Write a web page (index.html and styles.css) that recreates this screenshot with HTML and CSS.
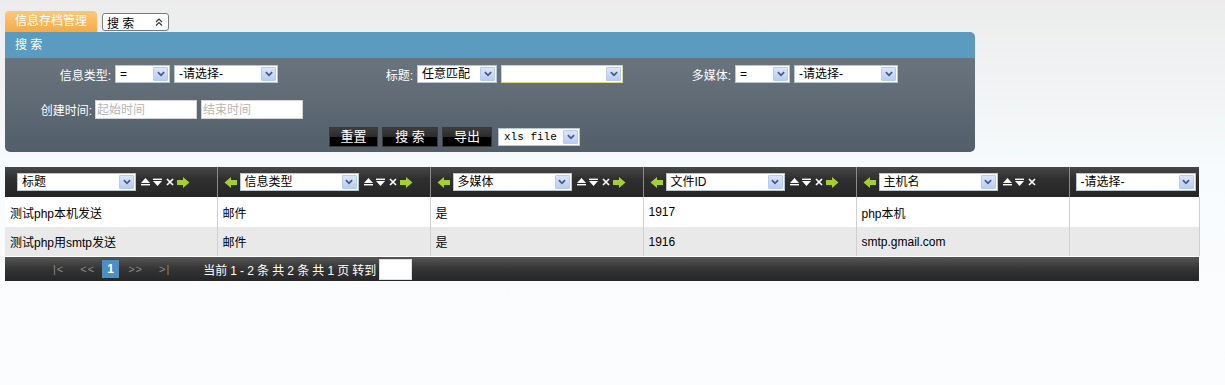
FILE: index.html
```html
<!DOCTYPE html>
<html>
<head>
<meta charset="utf-8">
<link rel="stylesheet" href="styles.css">
</head>
<body>
<svg class="defs" width="0" height="0">
  <defs>
    <symbol id="chev" viewBox="0 0 9 6"><path d="M1 1 L4.5 4.5 L8 1" fill="none" stroke="#465b80" stroke-width="2"/></symbol>
    <symbol id="up" viewBox="0 0 9 8"><path d="M4.5 0 L9 5 L0 5 Z" fill="#fff"/><rect x="0" y="6" width="9" height="1.4" fill="#fff"/></symbol>
    <symbol id="down" viewBox="0 0 9 8"><rect x="0" y="0.6" width="9" height="1.4" fill="#fff"/><path d="M0 3 L9 3 L4.5 8 Z" fill="#fff"/></symbol>
    <symbol id="x" viewBox="0 0 8 8"><path d="M1 1 L7 7 M7 1 L1 7" stroke="#fff" stroke-width="1.7"/></symbol>
    <symbol id="ar" viewBox="0 0 13 11"><path d="M0 3 H6 V0 L12.5 5.5 L6 11 V8 H0 Z" fill="#a4cf2c"/></symbol>
    <symbol id="al" viewBox="0 0 13 11"><path d="M13 3 H7 V0 L0.5 5.5 L7 11 V8 H13 Z" fill="#a4cf2c"/></symbol>
  </defs>
</svg>

<div class="tabs">
  <div class="tab">信息存档管理</div>
  <div class="tabsel"><span>搜 索</span><svg class="dchev" viewBox="0 0 10 10" width="10" height="10"><path d="M2 5 L5 2 L8 5 M2 8.5 L5 5.5 L8 8.5" fill="none" stroke="#333" stroke-width="1.2"/></svg></div>
</div>

<div class="panel">
  <div class="panel-head">搜 索</div>
  <div class="panel-body">
    <div class="row row1">
      <label class="lbl l1">信息类型:</label>
      <span class="sel w55"><span class="sel-t">=</span><span class="sel-b"><svg><use href="#chev"/></svg></span></span>
      <span class="sel w104"><span class="sel-t">-请选择-</span><span class="sel-b"><svg><use href="#chev"/></svg></span></span>
      <label class="lbl l2">标题:</label>
      <span class="sel w80"><span class="sel-t">任意匹配</span><span class="sel-b"><svg><use href="#chev"/></svg></span></span>
      <span class="sel w122 hl"><span class="sel-t"></span><span class="sel-b"><svg><use href="#chev"/></svg></span></span>
      <label class="lbl l3">多媒体:</label>
      <span class="sel w55"><span class="sel-t">=</span><span class="sel-b"><svg><use href="#chev"/></svg></span></span>
      <span class="sel w104"><span class="sel-t">-请选择-</span><span class="sel-b"><svg><use href="#chev"/></svg></span></span>
    </div>
    <div class="row row2">
      <label class="lbl l4">创建时间:</label>
      <input class="inp" placeholder="起始时间">
      <input class="inp" placeholder="结束时间">
    </div>
    <div class="row row3">
      <button class="btn b1">重置</button>
      <button class="btn b2">搜 索</button>
      <button class="btn b3">导出</button>
      <span class="sel w82 mono"><span class="sel-t">xls file</span><span class="sel-b"><svg><use href="#chev"/></svg></span></span>
    </div>
  </div>
</div>

<div class="grid">
  <table>
    <colgroup><col class="c1"><col class="c2"><col class="c2"><col class="c2"><col class="c2"><col class="c6"></colgroup>
    <thead>
      <tr>
        <th><div class="hc first">
          <span class="sel hs"><span class="sel-t">标题</span><span class="sel-b"><svg><use href="#chev"/></svg></span></span>
          <svg class="ic i9"><use href="#up"/></svg><svg class="ic i9"><use href="#down"/></svg><svg class="ic i8"><use href="#x"/></svg><svg class="ic i13"><use href="#ar"/></svg>
        </div></th>
        <th><div class="hc">
          <svg class="ic i13 la"><use href="#al"/></svg>
          <span class="sel hs"><span class="sel-t">信息类型</span><span class="sel-b"><svg><use href="#chev"/></svg></span></span>
          <svg class="ic i9"><use href="#up"/></svg><svg class="ic i9"><use href="#down"/></svg><svg class="ic i8"><use href="#x"/></svg><svg class="ic i13"><use href="#ar"/></svg>
        </div></th>
        <th><div class="hc">
          <svg class="ic i13 la"><use href="#al"/></svg>
          <span class="sel hs"><span class="sel-t">多媒体</span><span class="sel-b"><svg><use href="#chev"/></svg></span></span>
          <svg class="ic i9"><use href="#up"/></svg><svg class="ic i9"><use href="#down"/></svg><svg class="ic i8"><use href="#x"/></svg><svg class="ic i13"><use href="#ar"/></svg>
        </div></th>
        <th><div class="hc">
          <svg class="ic i13 la"><use href="#al"/></svg>
          <span class="sel hs"><span class="sel-t">文件ID</span><span class="sel-b"><svg><use href="#chev"/></svg></span></span>
          <svg class="ic i9"><use href="#up"/></svg><svg class="ic i9"><use href="#down"/></svg><svg class="ic i8"><use href="#x"/></svg><svg class="ic i13"><use href="#ar"/></svg>
        </div></th>
        <th><div class="hc">
          <svg class="ic i13 la"><use href="#al"/></svg>
          <span class="sel hs"><span class="sel-t">主机名</span><span class="sel-b"><svg><use href="#chev"/></svg></span></span>
          <svg class="ic i9"><use href="#up"/></svg><svg class="ic i9"><use href="#down"/></svg><svg class="ic i8"><use href="#x"/></svg>
        </div></th>
        <th><div class="hc last">
          <span class="sel hs6"><span class="sel-t">-请选择-</span><span class="sel-b"><svg><use href="#chev"/></svg></span></span>
        </div></th>
      </tr>
    </thead>
    <tbody>
      <tr class="odd"><td>测试php本机发送</td><td>邮件</td><td>是</td><td>1917</td><td>php本机</td><td></td></tr>
      <tr class="even"><td>测试php用smtp发送</td><td>邮件</td><td>是</td><td>1916</td><td>smtp.gmail.com</td><td></td></tr>
    </tbody>
  </table>
  <div class="pager">
    <span class="pg p1">|&lt;</span>
    <span class="pg p2">&lt;&lt;</span>
    <span class="cur">1</span>
    <span class="pg p3">&gt;&gt;</span>
    <span class="pg p4">&gt;|</span>
    <span class="info">当前 1 - 2 条 共 2 条 共 1 页 转到</span>
    <input class="goto">
  </div>
</div>
</body>
</html>
```

FILE: styles.css
```css
html, body {
  margin: 0;
  padding: 0;
}
body {
  width: 1225px;
  height: 385px;
  overflow: hidden;
  font-family: "Liberation Sans", "Noto Sans CJK SC", sans-serif;
  font-size: 12px;
  color: #000;
  background: linear-gradient(to bottom, #ececec 0px, #f1f3f4 90px, #f8fbfd 170px, #fbfcfe 385px);
}
.defs { position: absolute; width: 0; height: 0; }

/* tabs */
.tabs {
  display: flex;
  align-items: flex-end;
  padding: 11px 0 0 5px;
  height: 21px;
}
.tab {
  width: 92px;
  height: 21px;
  box-sizing: border-box;
  border-radius: 4px 4px 0 0;
  background: linear-gradient(to bottom, #fcc878, #f7ab45);
  color: #fff;
  line-height: 21px;
  text-align: center;
  font-size: 12px;
}
.tabsel {
  margin-left: 5px;
  margin-bottom: 1px;
  width: 67px;
  height: 18px;
  box-sizing: border-box;
  border: 1px solid #7a7a7a;
  border-radius: 3px;
  background: #fff;
  display: flex;
  align-items: center;
  justify-content: space-between;
  padding: 0 4px 0 4px;
  font-size: 12px;
}
.dchev { display: block; }

/* panel */
.panel {
  margin-left: 5px;
  width: 970px;
}
.panel-head {
  height: 26px;
  line-height: 26px;
  background: #5a9bbf;
  color: #fff;
  padding-left: 10px;
  border-radius: 0 5px 0 0;
  font-size: 12px;
}
.panel-body {
  height: 94px;
  box-sizing: border-box;
  padding-top: 7px;
  background: linear-gradient(to bottom, #69747e, #525e69);
  border-radius: 0 0 5px 5px;
}
.row {
  display: flex;
  align-items: center;
  gap: 4px;
}
.row1 { height: 18px; }
.row2 { height: 19px; margin-top: 17px; }
.row3 { height: 20px; margin-top: 8px; padding-left: 324px; }
.lbl {
  color: #fff;
  text-align: right;
  white-space: nowrap;
}
.l1 { width: 106px; }
.l2 { width: 131px; }
.l3 { width: 104px; }
.l4 { width: 87px; margin-right: -1px; }

.sel {
  display: inline-flex;
  align-items: center;
  height: 18px;
  box-sizing: border-box;
  border: 1px solid #b9c6d3;
  background: #fff;
  padding: 1px;
  color: #000;
  font-size: 12px;
}
.sel.hl { border-color: #ddd98a; }
.sel-t {
  flex: 1;
  padding-left: 3px;
  white-space: nowrap;
  overflow: hidden;
  text-align: left;
  font-weight: normal;
  line-height: 14px;
}
.sel-b {
  width: 15px;
  height: 14px;
  box-sizing: border-box;
  border: 1px solid #b8cbef;
  border-radius: 1px;
  background: linear-gradient(to bottom, #dbe6fb, #b9cdf3);
  display: flex;
  align-items: center;
  justify-content: center;
}
.sel-b svg { width: 8px; height: 6px; display: block; }
.w55 { width: 55px; }
.w80 { width: 80px; }
.w82 { width: 82px; }
.w104 { width: 104px; }
.w122 { width: 122px; }
.mono .sel-t { font-family: "Liberation Mono", "DejaVu Sans Mono", monospace; font-size: 11px; padding-left: 4px; }

.inp {
  width: 102px;
  height: 19px;
  box-sizing: border-box;
  border: 1px solid #d4d4d4;
  padding: 0 1px;
  font-family: "Liberation Sans", "Noto Sans CJK SC", sans-serif;
  font-size: 12px;
  outline: none;
  background: #fff;
}
.inp::placeholder { color: #b5b5b5; }

.btn {
  height: 20px;
  box-sizing: border-box;
  border: 1px solid #3a3a3a;
  background: linear-gradient(to bottom, #3d3d3d 0%, #2b2b2b 50%, #000 50%, #000 100%);
  color: #fff;
  font-family: "Liberation Sans", "Noto Sans CJK SC", sans-serif;
  font-size: 13px;
  padding: 0;
  line-height: 18px;
}
.b1 { width: 49px; }
.b2 { width: 56px; }
.b3 { width: 50px; }
.row3 .sel { margin-left: 2px; }

/* grid */
.grid {
  margin: 15px 0 0 5px;
  width: 1194px;
}
table {
  width: 1194px;
  border-collapse: collapse;
  table-layout: fixed;
}
col.c1 { width: 212px; }
col.c2 { width: 213px; }
col.c6 { width: 130px; }
th {
  height: 30px;
  padding: 0;
  background: linear-gradient(to bottom, #474747, #2f2f2f 40%, #262626);
  border-left: 1px solid #8a8a8a;
  font-weight: normal;
  vertical-align: middle;
}
th:first-child { border-left: none; }
.hc {
  display: flex;
  align-items: center;
  padding-left: 6px;
}
.hc.first { padding-left: 12px; }
.hc.last { padding-left: 6px; }
.hs { width: 119px; }
.hs6 { width: 120px; }
.ic { display: block; flex: none; }
.i9 { width: 9px; height: 8px; margin-left: 3px; }
.hc .sel + .i9 { margin-left: 5px; }
.i8 { width: 8px; height: 8px; margin-left: 4px; }
.i13 { width: 13px; height: 11px; margin-left: 3px; }
.la { margin-left: 0; margin-right: 3px; }

td {
  height: 29px;
  padding: 0 0 0 5px;
  border-left: 1px solid #cfcfcf;
  font-size: 12px;
  white-space: nowrap;
}
td:first-child { border-left: none; }
td:last-child { border-right: 1px solid #cfcfcf; }
tr.odd td { background: #fff; height: 30px; }
tr.even td { background: #e9e9e9; border-bottom: 1px solid #fff; }

.pager {
  height: 24px;
  background: linear-gradient(to bottom, #555, #343434 50%, #262626);
  display: flex;
  align-items: center;
  color: #fff;
}
.pg {
  color: #8a8a8a;
  font-size: 11px;
  letter-spacing: 1px;
}
.p1 { margin-left: 48px; }
.p2 { margin-left: 16px; }
.cur {
  margin-left: 7px;
  width: 17px;
  height: 18px;
  background: #4c90c2;
  color: #fff;
  font-weight: bold;
  text-align: center;
  line-height: 18px;
}
.p3 { margin-left: 9px; }
.p4 { margin-left: 16px; }
.info { margin-left: 33px; font-size: 12px; letter-spacing: -0.1px; }
.goto {
  margin-left: 3px;
  width: 33px;
  height: 21px;
  box-sizing: border-box;
  border: 1px solid #ddd;
  background: #fff;
  outline: none;
}
```
